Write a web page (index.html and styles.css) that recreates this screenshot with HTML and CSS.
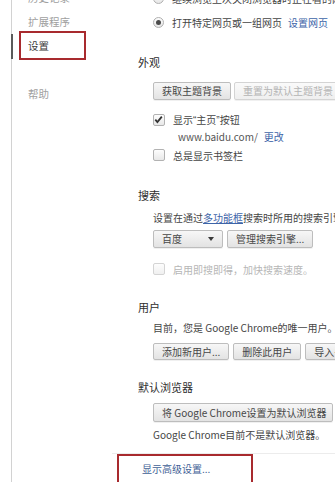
FILE: index.html
```html
<!DOCTYPE html>
<html lang="zh-CN">
<head>
<meta charset="utf-8">
<link rel="stylesheet" href="styles.css">
</head>
<body>
<div class="page">
  <nav class="nav">
    <div class="nav-item">历史记录</div>
    <div class="nav-item">扩展程序</div>
    <div class="nav-item selected">设置</div>
    <div class="nav-spacer"></div>
    <div class="nav-item">帮助</div>
  </nav>
  <main class="main">
    <div class="radio-row"><span class="radio"></span><span>继续浏览上次关闭浏览器时正在看的网页</span></div>
    <div class="radio-row"><span class="radio checked"></span><span>打开特定网页或一组网页</span><a class="link link-gap">设置网页</a></div>

    <h3 class="heading h-look">外观</h3>
    <div class="btn-row r-theme">
      <span class="btn">获取主题背景</span>
      <span class="btn disabled">重置为默认主题背景</span>
    </div>
    <div class="check-row r-home"><span class="checkbox checked"><svg viewBox="0 0 11 11" width="11" height="11"><path d="M2.3 5.6 L4.4 8 L8.8 2.6" fill="none" stroke="#333" stroke-width="1.8"/></svg></span><span>显示<span class="q">“</span>主页<span class="q">”</span>按钮</span></div>
    <div class="sub-row"><span class="url">www.baidu.com/</span><a class="link link-gap">更改</a></div>
    <div class="check-row"><span class="checkbox"></span><span>总是显示书签栏</span></div>

    <h3 class="heading h-search">搜索</h3>
    <div class="text-row r-desc">设置在通过<a class="link underline">多功能框</a>搜索时所用的搜索引擎。</div>
    <div class="btn-row r-engine">
      <span class="btn select"><span>百度</span><span class="arrow"></span></span>
      <span class="btn">管理搜索引擎...</span>
    </div>
    <div class="check-row disabled-row r-instant"><span class="checkbox dim"></span><span>启用即搜即得，加快搜索速度。</span></div>

    <h3 class="heading h-user">用户</h3>
    <div class="text-row r-only">目前，您是 Google Chrome的唯一用户。</div>
    <div class="btn-row r-users">
      <span class="btn">添加新用户...</span>
      <span class="btn">删除此用户</span>
      <span class="btn">导入书签和设置...</span>
    </div>

    <h3 class="heading h-default">默认浏览器</h3>
    <div class="btn-row r-default">
      <span class="btn wide">将 Google Chrome设置为默认浏览器</span>
    </div>
    <div class="text-row r-notdef">Google Chrome目前不是默认浏览器。</div>
  </main>
</div>
<div class="footer"><a class="link adv">显示高级设置...</a></div>
<div class="mark mark-nav"></div>
<div class="mark mark-adv"></div>
</body>
</html>
```
FILE: styles.css
```css
html, body {
  margin: 0;
  padding: 0;
  background: #fff;
}
body {
  width: 335px;
  height: 482px;
  overflow: hidden;
  position: relative;
  font-family: "Noto Sans CJK SC", "Microsoft YaHei", sans-serif;
  font-size: 10px;
  color: #454545;
}
.page {
  display: flex;
  margin-top: -14px;
}
.nav {
  width: 127px;
  margin-left: 11px;
  border-left: 1px solid #d2d2d2;
  min-height: 520px;
  box-sizing: border-box;
  flex: none;
}
.nav-item {
  height: 24px;
  line-height: 24px;
  padding-left: 16px;
  color: #a0a0a0;
  font-size: 10.5px;
}
.nav-item.selected {
  margin-left: -1px;
  border-left: 2px solid #5a5a5a;
  padding-left: 15px;
  color: #3c3c3c;
  height: 25px;
}
.nav-spacer {
  height: 23px;
}
.main {
  flex: 1;
  min-width: 0;
  overflow: hidden;
  white-space: nowrap;
}
.radio-row {
  height: 24px;
  display: flex;
  align-items: center;
  padding-left: 15px;
}
.radio {
  width: 9px;
  height: 9px;
  border: 1px solid #b0b0b0;
  border-radius: 50%;
  background: linear-gradient(#fdfdfd, #e6e6e6);
  margin-right: 8px;
  position: relative;
  flex: none;
}
.radio.checked::after {
  content: "";
  position: absolute;
  left: 2px;
  top: 2px;
  width: 5px;
  height: 5px;
  border-radius: 50%;
  background: #4a4a4a;
}
.link {
  color: #3d64a8;
  text-decoration: none;
}
.link-gap {
  margin-left: 6px;
}
.underline {
  text-decoration: underline;
}
.q {
  font-family: "Liberation Sans", sans-serif;
}
.heading {
  margin: 0;
  font-weight: normal;
  font-size: 11px;
  color: #2e2e2e;
  height: 18px;
  line-height: 18px;
}
.h-look { margin-top: 19px; }
.h-search { margin-top: 22px; }
.h-user { margin-top: 20px; }
.h-default { margin-top: 18px; }
.btn-row {
  display: flex;
  gap: 4px;
  padding-left: 15px;
}
.r-theme { margin-top: 11px; gap: 3px; }
.r-engine { margin-top: 3px; }
.r-users { margin-top: 6px; }
.r-default { margin-top: 7px; }
.btn {
  flex: none;
  height: 18px;
  box-sizing: border-box;
  line-height: 16px;
  padding: 0 8px;
  border: 1px solid #bdbdbd;
  border-radius: 2px;
  background: linear-gradient(#f7f7f7, #e3e3e3);
  color: #474747;
  box-shadow: 0 1px 0 rgba(0,0,0,0.06);
}
.btn.disabled {
  color: #b4b4b4;
  border-color: #d4d4d4;
  background: linear-gradient(#fafafa, #efefef);
}
.r-users .btn { height: 17px; line-height: 15px; }
.r-default .btn { height: 19px; line-height: 17px; }
.btn.wide { width: 180px; text-align: center; }
.btn.select {
  width: 70px;
  display: flex;
  justify-content: space-between;
  align-items: center;
}
.arrow {
  width: 0;
  height: 0;
  border-left: 3px solid transparent;
  border-right: 3px solid transparent;
  border-top: 4px solid #3a3a3a;
}
.check-row {
  display: flex;
  align-items: center;
  padding-left: 15px;
  height: 18px;
}
.r-home { margin-top: 11px; height: 17px; }
.r-instant { margin-top: 12px; }
.checkbox {
  width: 10px;
  height: 10px;
  border: 1px solid #b2b2b2;
  border-radius: 2px;
  background: linear-gradient(#fdfdfd, #e8e8e8);
  margin-right: 8px;
  flex: none;
  position: relative;
}
.checkbox svg {
  position: absolute;
  left: -1px;
  top: -1px;
}
.checkbox.dim {
  border-color: #d4d4d4;
  background: linear-gradient(#fdfdfd, #f0f0f0);
}
.disabled-row {
  color: #b6b6b6;
}
.sub-row {
  height: 18px;
  line-height: 18px;
  padding-left: 40px;
}
.url {
  color: #555;
}
.text-row {
  height: 18px;
  line-height: 18px;
  padding-left: 15px;
}
.r-desc { margin-top: 5px; }
.r-only { margin-top: 3px; }
.r-notdef { margin-top: 4px; }
.footer {
  position: absolute;
  left: 112px;
  right: 0;
  top: 453px;
  border-top: 1px solid #ececec;
  padding-left: 30px;
  padding-top: 6px;
  height: 18px;
  line-height: 18px;
}
.adv {
  color: #3f5f96;
}
.mark {
  position: absolute;
  border: 2.5px solid #a82a2e;
  box-sizing: border-box;
}
.mark-nav {
  left: 19px;
  top: 31px;
  width: 67px;
  height: 29px;
}
.mark-adv {
  left: 117px;
  top: 454px;
  width: 136px;
  height: 40px;
}
```
